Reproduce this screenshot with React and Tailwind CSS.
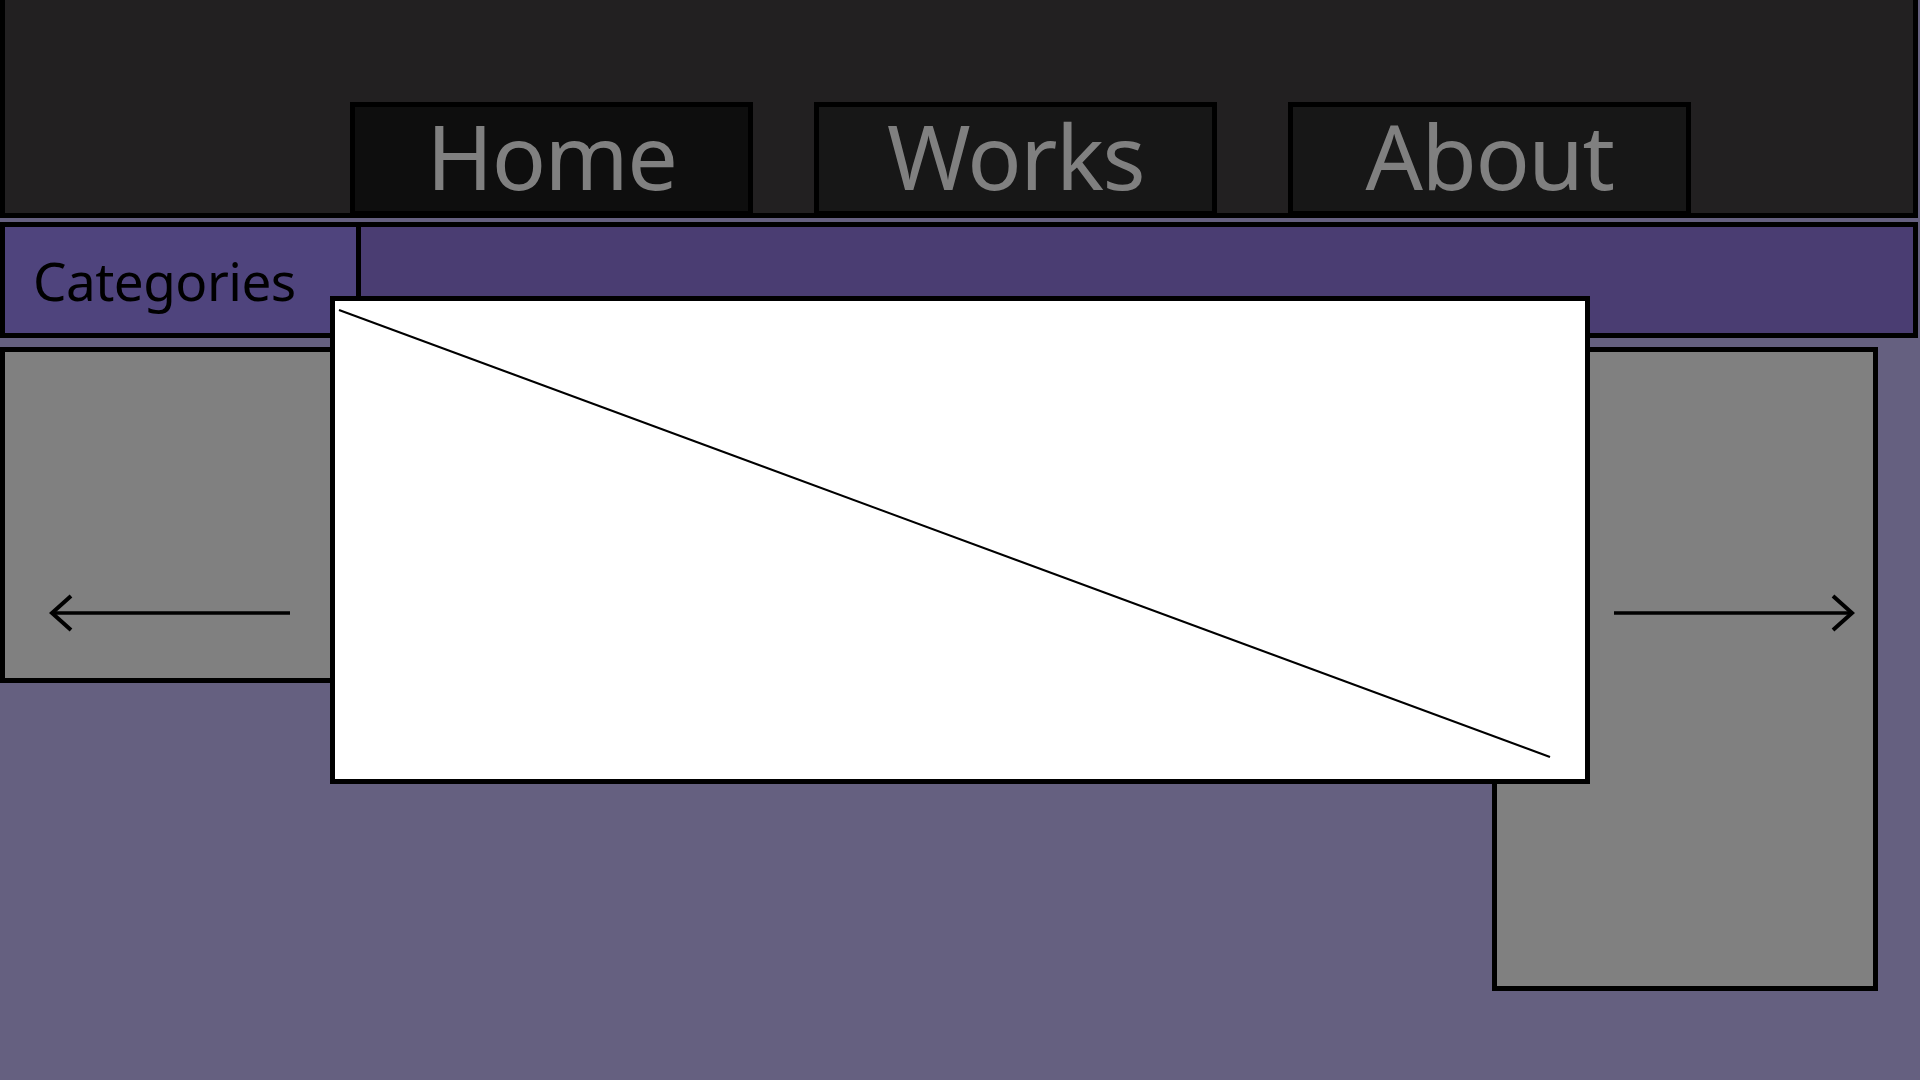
import React from 'react';

const navItems = [
  { label: 'Home', bg: 'bg-[#0e0e0e]', gap: 'ml-[345px]' },
  { label: 'Works', bg: 'bg-[#171717]', gap: 'ml-[61px]' },
  { label: 'About', bg: 'bg-[#171717]', gap: 'ml-[71px]' },
];

function LeftArrow() {
  return (
    <svg width="242" height="40" viewBox="0 0 242 40" fill="none" stroke="black">
      <line x1="3" y1="20" x2="241" y2="20" strokeWidth="3.5" />
      <polyline points="22,3 3,20 22,37" strokeWidth="4" />
    </svg>
  );
}

function RightArrow() {
  return (
    <svg width="242" height="40" viewBox="0 0 242 40" fill="none" stroke="black">
      <line x1="1" y1="20" x2="239" y2="20" strokeWidth="3.5" />
      <polyline points="220,3 239,20 220,37" strokeWidth="4" />
    </svg>
  );
}

export default function App() {
  return (
    <div className="relative min-h-screen w-full bg-[#656080] font-['Noto_Sans',sans-serif]">
      {/* top nav */}
      <header className="flex items-start w-[1918px] h-[218px] bg-[#222021] border-x-[5px] border-b-[5px] border-black">
        {navItems.map((item) => (
          <a
            key={item.label}
            href="#"
            className={`${item.gap} ${item.bg} mt-[102px] w-[403px] h-[114px] shrink-0 border-[5px] border-black flex items-center justify-center text-[90px] leading-none text-[#808080] tracking-[-1.5px]`}
          >
            <span className="-mt-[9px]">{item.label}</span>
          </a>
        ))}
      </header>

      {/* categories bar */}
      <div className="mt-[4px] flex w-[1918px] h-[116px] bg-[#4a3d72] border-[5px] border-black">
        <div className="w-[356px] h-full bg-[#4f447d] border-r-[5px] border-black flex items-center pl-[28px]">
          <span className="text-[53px] leading-none text-black tracking-[-0.5px]">Categories</span>
        </div>
      </div>

      {/* side panels */}
      <div className="mt-[9px] flex items-start justify-between w-[1878px]">
        <div className="w-[386px] h-[336px] bg-[#808080] border-[5px] border-black pt-[241px] pl-[44px]">
          <LeftArrow />
        </div>
        <div className="w-[386px] h-[644px] bg-[#808080] border-[5px] border-black pt-[241px] pl-[116px]">
          <RightArrow />
        </div>
      </div>

      {/* image placeholder overlay */}
      <div className="absolute left-[330px] top-[296px] w-[1260px] h-[488px] bg-white border-[5px] border-black">
        <svg width="1250" height="478" viewBox="0 0 1250 478" className="block">
          <line x1="4" y1="9" x2="1215" y2="456" stroke="black" strokeWidth="2" />
        </svg>
      </div>
    </div>
  );
}
